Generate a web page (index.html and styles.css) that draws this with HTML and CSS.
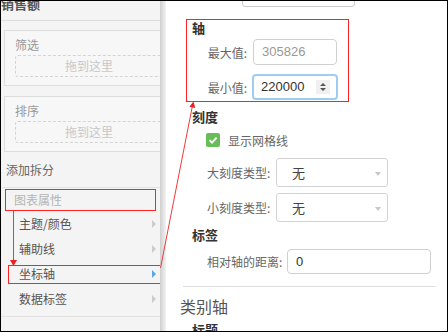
FILE: index.html
```html
<!DOCTYPE html>
<html lang="zh-CN">
<head>
    <meta charset="UTF-8">
    <title>坐标轴设置</title>
    <link rel="stylesheet" href="styles.css">
</head>
<body>
    <div class="frame">
        <aside class="side">
            <div class="side-head"><span>销售额</span></div>
            <div class="card">
                <div class="card-title">筛选</div>
                <div class="drop">拖到这里</div>
            </div>
            <div class="card">
                <div class="card-title">排序</div>
                <div class="drop">拖到这里</div>
            </div>
            <div class="split">添加拆分</div>
            <div class="group-title">图表属性</div>
            <ul class="menu">
                <li>主题/颜色<i class="tri"></i></li>
                <li>辅助线<i class="tri"></i></li>
                <li class="active">坐标轴<i class="tri"></i></li>
                <li>数据标签<i class="tri"></i></li>
            </ul>
        </aside>
        <div class="scroll"></div>
        <main class="main">
            <div class="top-input"></div>

            <section class="axis-box">
                <h4>轴</h4>
                <div class="row row-max">
                    <label class="lbl w40">最大值:</label>
                    <div class="input num muted">305826</div>
                </div>
                <div class="row row-min">
                    <label class="lbl w40">最小值:</label>
                    <div class="input num focus">220000
                        <span class="spin">
                            <svg width="8" height="10" viewBox="0 0 8 10"><path d="M1 4 L4 1 L7 4 Z M1 6 L4 9 L7 6 Z" fill="#555"/></svg>
                        </span>
                    </div>
                </div>
            </section>

            <div class="body">
                <h4 class="sub">刻度</h4>
                <div class="check-row">
                    <span class="check">
                        <svg width="14" height="14" viewBox="0 0 14 14"><path d="M3.5 7.2 L6 9.6 L10.6 4.6" fill="none" stroke="#fff" stroke-width="1.8"/></svg>
                    </span>
                    <span>显示网格线</span>
                </div>
                <div class="row row-sel1">
                    <label class="lbl w62">大刻度类型:</label>
                    <div class="select">无<i class="caret"></i></div>
                </div>
                <div class="row row-sel2">
                    <label class="lbl w62">小刻度类型:</label>
                    <div class="select">无<i class="caret"></i></div>
                </div>

                <h4 class="sub sub-label">标签</h4>
                <div class="row row-dist">
                    <label class="lbl w74">相对轴的距离:</label>
                    <div class="input wide">0</div>
                </div>

                <hr class="divider">
                <h3 class="cat">类别轴</h3>
                <h4 class="sub sub-title">标题</h4>
            </div>
        </main>

        <svg class="arrows" width="448" height="332" viewBox="0 0 448 332">
            <line x1="13.5" y1="211" x2="13.5" y2="261" stroke="#f03a3a" stroke-width="1"/>
            <polygon points="10,260 17,260 13.5,266" fill="#f01e1e"/>
            <line x1="160.5" y1="268" x2="192.4" y2="106" stroke="#f03a3a" stroke-width="1"/>
            <polygon points="193.5,101.5 195.2,108 189.4,106.8" fill="#f01e1e"/>
        </svg>
    </div>
</body>
</html>
```

FILE: styles.css
```css
body {
    margin: 0;
    font-family: "Noto Sans CJK SC", "Liberation Sans", sans-serif;
    font-size: 12px;
    color: #666;
    background: #fff;
}
.frame {
    position: relative;
    width: 446px;
    height: 330px;
    border: 1px solid #000;
    display: flex;
    overflow: hidden;
    background: #fff;
}
.side {
    width: 159px;
    flex: none;
    background: #f4f4f4;
    overflow: hidden;
}
.side-head {
    height: 19px;
    border-bottom: 1px solid #ddd;
    overflow: hidden;
}
.side-head span {
    display: block;
    margin-top: -7px;
    font-size: 13px;
    font-weight: bold;
    line-height: 20px;
    color: #555;
}
.card {
    margin: 9px -12px 0 3px;
    padding: 6px 0 8px 10px;
    border: 1px solid #ddd;
    background: #f7f7f7;
}
.card + .card {
    margin-top: 10px;
}
.card-title {
    line-height: 16px;
    color: #999;
}
.drop {
    margin-top: 2px;
    height: 20px;
    width: 146px;
    border: 1px dashed #d4d4d4;
    border-radius: 3px;
    text-align: center;
    line-height: 20px;
    font-size: 12px;
    color: #c8c8c8;
}
.split {
    margin-top: 8px;
    padding: 0 0 7px 5px;
    line-height: 20px;
    font-size: 12px;
    color: #666;
    border-bottom: 1px solid #e2e2e2;
}
.group-title {
    margin: 1px 4px 0 4px;
    height: 20px;
    padding-left: 8px;
    border: 1px solid #f22;
    line-height: 20px;
    color: #b5b5b5;
}
.menu {
    list-style: none;
    margin: 0;
    padding: 0 0 5px 0;
    border-bottom: 1px solid #e2e2e2;
}
.menu li {
    position: relative;
    height: 25px;
    padding-left: 18px;
    line-height: 25px;
    font-size: 12px;
    color: #555;
}
.menu li.active::after {
    content: "";
    position: absolute;
    left: 7px;
    right: -1px;
    top: 4px;
    bottom: 2px;
    border: 1px solid #f22;
}
.tri {
    position: absolute;
    right: 4px;
    top: 9px;
    width: 0;
    height: 0;
    border-top: 4px solid transparent;
    border-bottom: 4px solid transparent;
    border-left: 4px solid #ccc;
}
.menu li.active .tri {
    border-left-color: #5aa7e4;
}
.scroll {
    width: 6px;
    flex: none;
    background: linear-gradient(to right, #cfcfcf, #e4e4e4 60%, #f3f3f3);
}
.main {
    flex: 1;
    min-width: 0;
}
.top-input {
    width: 111px;
    height: 20px;
    margin: -16px 0 0 76px;
    border: 1px solid #ccc;
    border-radius: 3px;
}
.axis-box {
    width: 156px;
    margin: 12px 0 0 20px;
    padding: 0 0 1px 5px;
    border: 1px solid #f22;
}
.body {
    padding-left: 26px;
}
h4 {
    margin: 0;
    line-height: 16px;
    font-size: 13px;
    font-weight: bold;
    color: #333;
}
.row {
    display: flex;
    align-items: center;
    padding-left: 15px;
}
.lbl {
    flex: none;
    text-align: right;
    color: #666;
    white-space: nowrap;
}
.w40 {
    width: 40px;
    margin-right: 6px;
}
.w62 {
    width: 62px;
    margin-right: 7px;
}
.w74 {
    width: 75px;
    margin-right: 5px;
}
.input {
    position: relative;
    box-sizing: border-box;
    height: 26px;
    border: 1px solid #d0d0d0;
    border-radius: 4px;
    padding-left: 8px;
    line-height: 24px;
    font-family: "Liberation Sans", sans-serif;
    font-size: 13px;
    color: #333;
}
.num {
    width: 84px;
}
.muted {
    color: #999;
}
.focus {
    width: 86px;
    margin-left: -1px;
    border: 2px solid #9fcdf2;
    line-height: 22px;
    padding-left: 7px;
}
.spin {
    position: absolute;
    right: 6px;
    top: 4px;
    width: 14px;
    height: 14px;
    background: #f0f0f0;
    display: flex;
    align-items: center;
    justify-content: center;
}
.row-max {
    margin-top: 3px;
}
.row-min {
    margin-top: 9px;
}
.sub {
    margin-top: 7px;
}
.check-row {
    display: flex;
    align-items: center;
    height: 18px;
    margin: 6px 0 0 14px;
    font-size: 12px;
    color: #666;
}
.check {
    width: 14px;
    height: 14px;
    margin-right: 8px;
    border-radius: 2px;
    background: #68bd58;
    display: flex;
}
.select {
    position: relative;
    box-sizing: border-box;
    width: 112px;
    height: 29px;
    padding-left: 15px;
    border: 1px solid #d4d4d4;
    border-radius: 3px;
    line-height: 27px;
    font-size: 13px;
    color: #444;
}
.caret {
    position: absolute;
    right: 6px;
    top: 13px;
    width: 0;
    height: 0;
    border-left: 3.5px solid transparent;
    border-right: 3.5px solid transparent;
    border-top: 4px solid #c8c8c8;
}
.row-sel1 {
    margin-top: 9px;
}
.row-sel2 {
    margin-top: 6px;
}
.sub-label {
    margin-top: 5px;
}
.row-dist {
    margin-top: 6px;
}
.wide {
    width: 144px;
    height: 25px;
    line-height: 23px;
}
.divider {
    width: 253px;
    margin: 12px 0 0 -9px;
    border: 0;
    border-top: 1px solid #dedede;
}
.cat {
    margin: 9px 0 0 -12px;
    line-height: 20px;
    font-size: 16px;
    font-weight: normal;
    color: #555;
}
.sub-title {
    margin-top: 6px;
}
.arrows {
    position: absolute;
    left: -1px;
    top: -1px;
    pointer-events: none;
}
```
